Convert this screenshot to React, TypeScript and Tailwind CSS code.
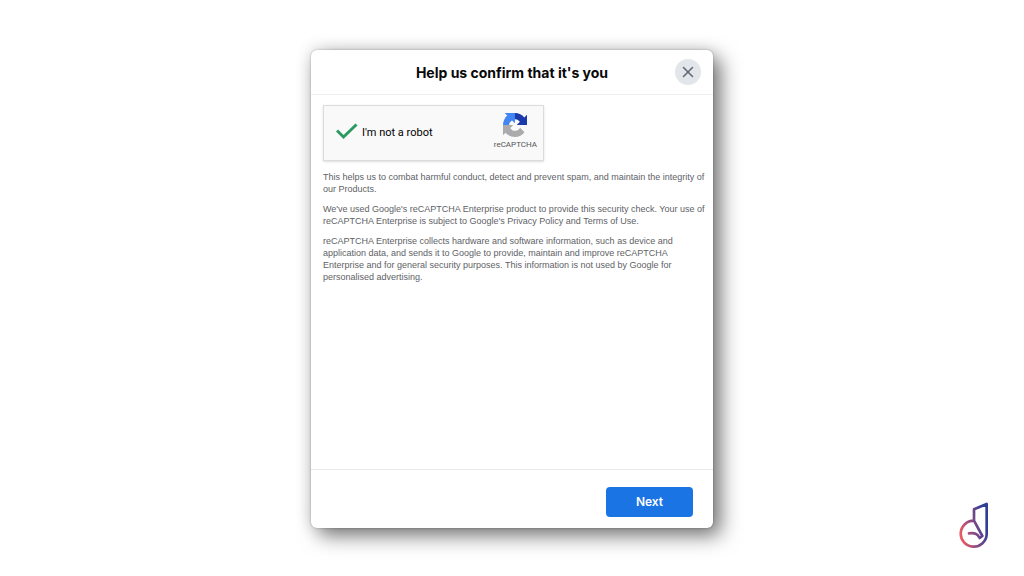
import React, { useState } from 'react';
import { X } from 'lucide-react';

const paragraphs = [
  'This helps us to combat harmful conduct, detect and prevent spam, and maintain the integrity of our Products.',
  "We've used Google's reCAPTCHA Enterprise product to provide this security check. Your use of reCAPTCHA Enterprise is subject to Google's Privacy Policy and Terms of Use.",
  'reCAPTCHA Enterprise collects hardware and software information, such as device and application data, and sends it to Google to provide, maintain and improve reCAPTCHA Enterprise and for general security purposes. This information is not used by Google for personalised advertising.',
];

const RecaptchaLogo: React.FC = () => (
  <svg viewBox="0 0 64 64" className="h-6 w-6" aria-hidden="true">
    <path
      fill="#1c3aa9"
      d="M64 31.955l-.033-1.37V4.687l-7.16 7.16C50.948 4.674 42.033.093 32.05.093c-10.4 0-19.622 4.96-25.458 12.64l11.736 11.86a15.55 15.55 0 0 1 4.754-5.334c2.05-1.6 4.952-2.906 8.968-2.906.485 0 .86.057 1.135.163 4.976.393 9.288 3.14 11.828 7.124l-8.307 8.307L64 31.953"
    />
    <path
      fill="#4285f4"
      d="M31.862.094l-1.37.033H4.594l7.16 7.16C4.58 13.147 0 22.06 0 32.046c0 10.4 4.96 19.622 12.64 25.458L24.5 45.768a15.55 15.55 0 0 1-5.334-4.754c-1.6-2.05-2.906-4.952-2.906-8.968 0-.485.057-.86.163-1.135.393-4.976 3.14-9.288 7.124-11.828l8.307 8.307L31.86.095"
    />
    <path
      fill="#ababab"
      d="M.001 32.045l.033 1.37v25.898l7.16-7.16c5.86 7.173 14.774 11.754 24.76 11.754 10.4 0 19.622-4.96 25.458-12.64l-11.736-11.86a15.55 15.55 0 0 1-4.754 5.334c-2.05 1.6-4.952 2.906-8.968 2.906-.485 0-.86-.057-1.135-.163-4.976-.393-9.288-3.14-11.828-7.124l8.307-8.307c-10.522.04-22.4.066-27.295-.005"
    />
  </svg>
);

const BrandMark: React.FC = () => (
  <svg viewBox="27 20 90 141" className="h-[47px] w-[30px]" fill="none" aria-hidden="true">
    <defs>
      <linearGradient id="brand" gradientUnits="userSpaceOnUse" x1="30" y1="120" x2="112" y2="100">
        <stop offset="0" stopColor="#ee5c60" />
        <stop offset="0.5" stopColor="#8a4a86" />
        <stop offset="1" stopColor="#2f3f94" />
      </linearGradient>
    </defs>
    <path
      d="M72 76V42L110 26V118A39 39 0 1 1 72 76L97 122L89 128C82 114 74 112 57 114"
      stroke="url(#brand)"
      strokeWidth="8"
      strokeLinejoin="round"
      strokeLinecap="round"
    />
  </svg>
);

const RobotCheck: React.FC = () => {
  const [checked, setChecked] = useState(true);

  return (
    <div className="flex h-14 w-[221px] items-center justify-between border border-[#dcdcdc] bg-[#f9f9f9] pl-3 pr-1.5 shadow-sm">
      <div className="flex items-center gap-1">
        <span className="grid h-5 w-[22px] place-items-center">
          <input
            id="robot"
            type="checkbox"
            checked={checked}
            onChange={(e) => setChecked(e.target.checked)}
            className="peer col-start-1 row-start-1 h-5 w-[22px] appearance-none"
          />
          <svg
            viewBox="0 0 22 20"
            className="pointer-events-none invisible col-start-1 row-start-1 h-5 w-[22px] peer-checked:visible"
            fill="none"
            stroke="#2a9a60"
            strokeWidth="3"
          >
            <path d="M1 7.5L7.5 14L20.5 1.5" />
          </svg>
        </span>
        <label
          htmlFor="robot"
          className="font-[family-name:Roboto,sans-serif] text-[11px] leading-4 text-black"
        >
          I'm not a robot
        </label>
      </div>
      <div className="flex flex-col items-center gap-1 pb-1">
        <RecaptchaLogo />
        <span className="font-[family-name:Roboto,sans-serif] text-[8px] leading-[8px] text-[#555555]">
          reCAPTCHA
        </span>
      </div>
    </div>
  );
};

export default function App() {
  return (
    <main className="grid min-h-screen grid-cols-[1fr_minmax(0,402px)_1fr] items-center bg-white pt-0.5">
      <section
        aria-labelledby="dialog-title"
        className="col-start-2 flex flex-col rounded-md bg-white shadow-[0_0_2px_rgba(0,0,0,0.3),0_0_16px_rgba(0,0,0,0.15),8px_8px_20px_rgba(0,0,0,0.5)]"
      >
        <header className="grid h-[45px] grid-cols-[1fr_auto_1fr] items-center border-b border-[#eeeff1] px-3">
          <h1
            id="dialog-title"
            className="col-start-2 font-[family-name:Inter,sans-serif] text-[14px] font-bold text-[#080809]"
          >
            Help us confirm that it's you
          </h1>
          <button
            type="button"
            aria-label="Close"
            className="grid h-[26px] w-[26px] place-items-center justify-self-end rounded-full bg-[#e2e5ea]"
          >
            <X className="h-[18px] w-[18px] text-[#5f6673]" strokeWidth={2} />
          </button>
        </header>

        <div className="min-h-[374px] pt-[10px] pr-1.5 pl-3">
          <RobotCheck />
          <div className="mt-[10px] space-y-2 font-[family-name:'Liberation_Sans',sans-serif] text-[9px] leading-[12px] text-[#606266]">
            {paragraphs.map((text) => (
              <p key={text}>{text}</p>
            ))}
          </div>
        </div>

        <footer className="flex justify-end border-t border-[#e8e9eb] px-5 pt-[17px] pb-[11px]">
          <button
            type="button"
            className="h-[30px] w-[87px] rounded bg-[#1b74e4] font-[family-name:Inter,sans-serif] text-[12px] font-semibold text-white"
          >
            Next
          </button>
        </footer>
      </section>

      <div className="self-end justify-self-end pr-[35px] pb-[27px]">
        <BrandMark />
      </div>
    </main>
  );
}
